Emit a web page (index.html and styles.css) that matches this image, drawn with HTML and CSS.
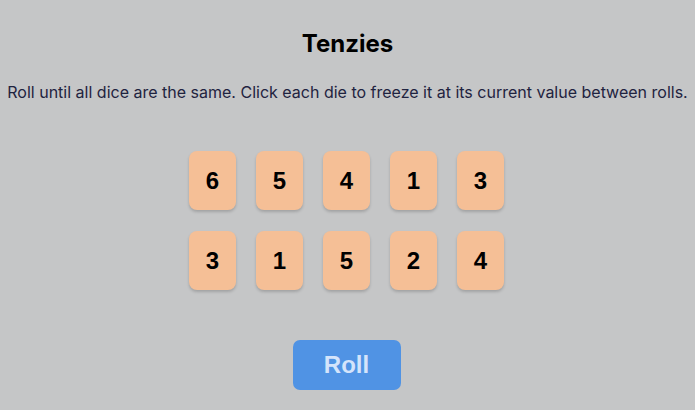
FILE: index.html
```html
<!DOCTYPE html>
<html>
<head>
<meta charset="utf-8">
<link rel="stylesheet" href="styles.css">
</head>
<body>
<main class="game">
  <h1 class="title">Tenzies</h1>
  <p class="instructions">Roll until all dice are the same. Click each die to freeze it at its current value between rolls.</p>
  <div class="dice">
    <button class="die">6</button>
    <button class="die">5</button>
    <button class="die">4</button>
    <button class="die">1</button>
    <button class="die">3</button>
    <button class="die">3</button>
    <button class="die">1</button>
    <button class="die">5</button>
    <button class="die">2</button>
    <button class="die">4</button>
  </div>
  <button class="roll">Roll</button>
</main>
</body>
</html>
```
FILE: styles.css
```css
html, body {
  margin: 0;
  padding: 0;
  height: 100%;
}
body {
  background: #c5c6c7;
  font-family: Inter, "Liberation Sans", sans-serif;
  color: #2b283a;
}
.game {
  display: flex;
  flex-direction: column;
  align-items: center;
  padding-top: 29px;
}
.title {
  margin: 0;
  font-size: 24px;
  font-weight: 700;
  color: #000;
  line-height: 30px;
}
.instructions {
  margin: 22px 0 0;
  font-size: 16px;
  line-height: 22px;
  color: #1f2340;
  text-align: center;
}
.dice {
  margin-top: 48px;
  margin-right: 2px;
  display: grid;
  grid-template-columns: repeat(5, 47px);
  grid-auto-rows: 59px;
  column-gap: 20px;
  row-gap: 21px;
}
.die {
  border: none;
  border-radius: 8px;
  background: #f5bf96;
  box-shadow: 0 2px 3px rgba(0, 0, 0, 0.18);
  font-family: "Liberation Sans", Arial, sans-serif;
  font-weight: 700;
  font-size: 24px;
  color: #000;
  padding: 0;
}
.roll {
  margin-top: 50px;
  margin-right: 2px;
  width: 108px;
  height: 50px;
  border: none;
  border-radius: 7px;
  background: #5093e4;
  color: #d4e4fb;
  font-family: "Liberation Sans", Arial, sans-serif;
  font-weight: 700;
  font-size: 24px;
  padding: 0;
}
```
